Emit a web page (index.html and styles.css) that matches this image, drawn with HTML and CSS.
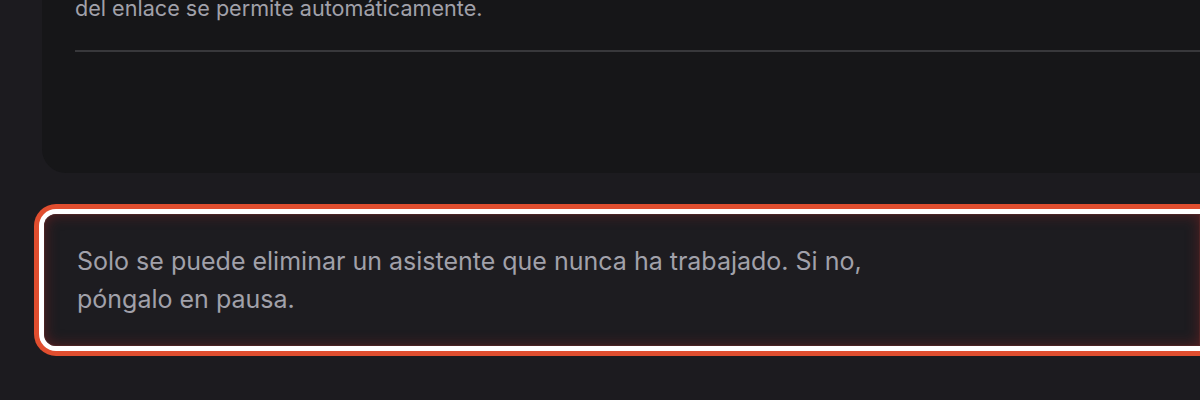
FILE: index.html
```html
<!DOCTYPE html>
<html lang="es">
<head>
<meta charset="utf-8">
<link rel="stylesheet" href="styles.css">
</head>
<body>
<main class="page">
  <section class="card">
    <p class="card-text">del enlace se permite automáticamente.</p>
    <hr class="divider">
  </section>
  <div class="notice">
    <p class="notice-text">Solo se puede eliminar un asistente que nunca ha trabajado. Si no,<br>póngalo en pausa.</p>
  </div>
</main>
</body>
</html>
```
FILE: styles.css
```css
html, body {
  margin: 0;
  padding: 0;
  background: #1c1b1f;
  height: 100%;
  overflow: hidden;
}
.page {
  display: flex;
  flex-direction: column;
  padding-left: 42px;
  font-family: Inter, "Noto Sans", sans-serif;
  color: #a1a1aa;
}
.card {
  background: #161618;
  border-radius: 0 0 0 24px;
  margin-top: -40px;
  height: 213px;
  padding-left: 33px;
  box-sizing: border-box;
}
.card-text {
  margin: 0;
  padding-top: 34px;
  font-size: 21.6px;
  line-height: 28px;
  white-space: nowrap;
}
.divider {
  margin: 28px 0 0 0;
  border: 0;
  height: 2px;
  background: #38383b;
}
.notice {
  margin-top: 41px;
  margin-left: 2px;
  height: 132px;
  box-sizing: border-box;
  border-radius: 12px 0 0 12px;
  background: #1d1c20;
  box-shadow: 0 0 0 5px #ffffff, 0 0 0 10px #e04e2f, inset 0 0 0 1px rgba(90, 40, 40, 0.6), inset 0 0 14px rgba(130, 35, 35, 0.6);
  padding: 28px 0 0 33px;
}
.notice-text {
  margin: 0;
  font-size: 25px;
  line-height: 38px;
  white-space: nowrap;
}
```
